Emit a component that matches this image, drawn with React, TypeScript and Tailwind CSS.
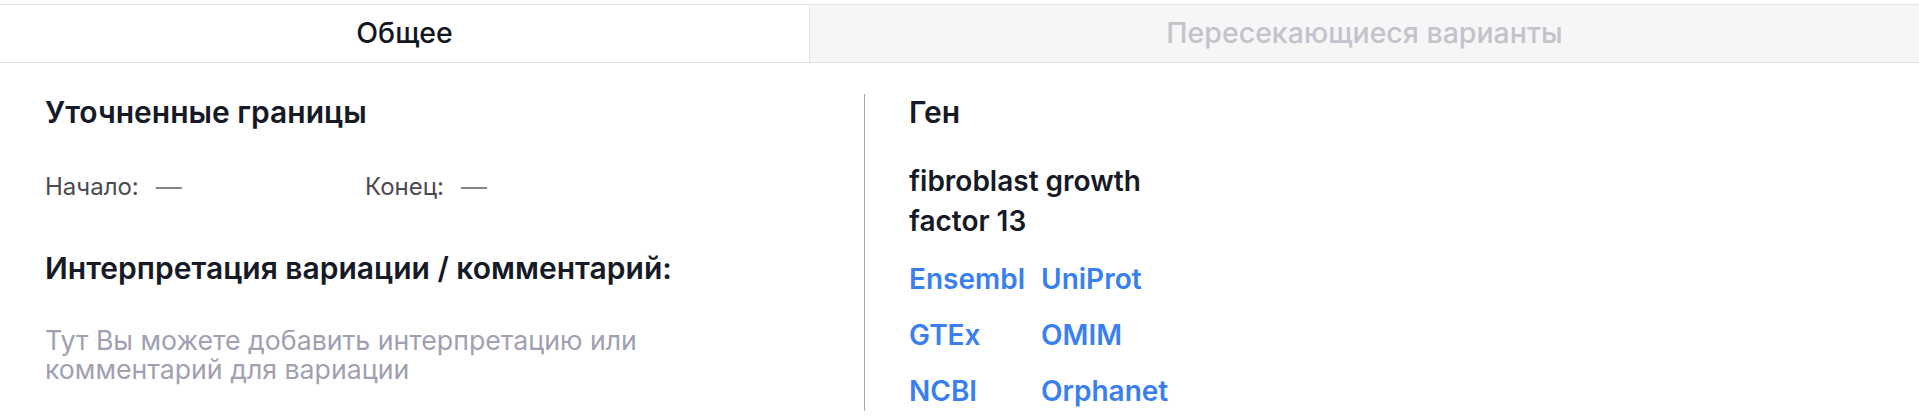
import React from 'react';

const LINKS = ['Ensembl', 'UniProt', 'GTEx', 'OMIM', 'NCBI', 'Orphanet'];

function Tabs() {
  return (
    <div className="mt-[4px] flex h-[59px] border-y border-[#e3e3eb]">
      <button className="flex w-[810px] items-center justify-center border-r border-[#e3e3eb] bg-white text-[28.5px] font-medium text-[#14161f]">
        Общее
      </button>
      <button className="flex flex-1 items-center justify-center bg-[#f6f6f6] text-[28.5px] font-medium text-[#c3c3cc]">
        Пересекающиеся варианты
      </button>
    </div>
  );
}

export default function App() {
  return (
    <div className="min-h-screen bg-white font-['Inter',sans-serif]">
      <Tabs />

      <div className="flex pt-[31px]">
        {/* ── Left: boundaries + comment ─────────────── */}
        <div className="w-[864px] shrink-0 pl-[45px]">
          <h3 className="text-[30px] font-semibold leading-[36px] text-[#161a26]">Уточненные границы</h3>

          <div className="mt-[42px] grid w-[640px] grid-cols-2 text-[24px] leading-[30px]">
            <div className="flex items-center gap-[17px] text-[#4a4a4f]">
              Начало:<span className="text-[26px] text-[#85858c]">—</span>
            </div>
            <div className="flex items-center gap-[17px] text-[#4a4a4f]">
              Конец:<span className="text-[26px] text-[#85858c]">—</span>
            </div>
          </div>

          <h3 className="mt-[48px] text-[30px] font-semibold leading-[36px] text-[#161a26]">
            Интерпретация вариации / комментарий:
          </h3>

          <p className="mt-[40px] w-[680px] text-[26.7px] leading-[29px] text-[#a0a0b2]">
            Тут Вы можете добавить интерпретацию или
            <br />
            комментарий для вариации
          </p>
        </div>

        {/* ── Right: gene ────────────────────────────── */}
        <div className="flex-1 border-l border-[#a9a9ad] pl-[44px]">
          <h3 className="text-[30px] font-semibold leading-[36px] text-[#161a26]">Ген</h3>

          <div className="mt-[31px] w-[280px] text-[28px] font-semibold leading-[40px] text-[#161a26]">
            fibroblast growth factor 13
          </div>

          <div className="mt-[18px] grid w-max grid-cols-[auto_auto] gap-x-[16px] gap-y-[16px]">
            {LINKS.map((l) => (
              <a key={l} href="#" className="text-[28px] font-semibold leading-[40px] text-[#3a7ff0]">
                {l}
              </a>
            ))}
          </div>
        </div>
      </div>
    </div>
  );
}
